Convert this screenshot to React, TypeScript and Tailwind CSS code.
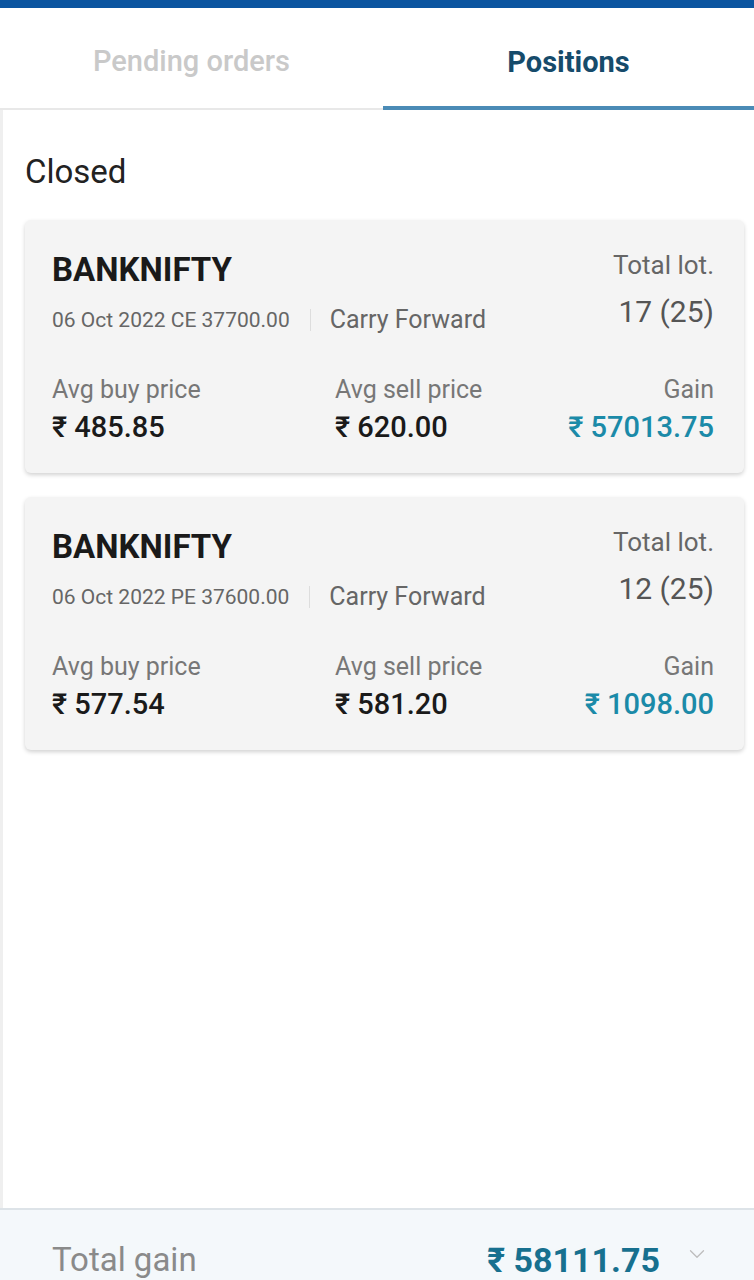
import { ChevronDown } from "lucide-react";

type Position = {
    symbol: string;
    contract: string;
    product: string;
    lots: string;
    buy: string;
    sell: string;
    gain: string;
};

const positions: Position[] = [
    {
        symbol: "BANKNIFTY",
        contract: "06 Oct 2022 CE 37700.00",
        product: "Carry Forward",
        lots: "17 (25)",
        buy: "₹ 485.85",
        sell: "₹ 620.00",
        gain: "₹ 57013.75",
    },
    {
        symbol: "BANKNIFTY",
        contract: "06 Oct 2022 PE 37600.00",
        product: "Carry Forward",
        lots: "12 (25)",
        buy: "₹ 577.54",
        sell: "₹ 581.20",
        gain: "₹ 1098.00",
    },
];

function PositionCard({ p }: { p: Position }) {
    return (
        <div className="h-[253px] rounded-md bg-[#f4f4f4] pl-[27px] pr-[30px] pt-[30px] shadow-[0_2px_4px_rgba(0,0,0,0.18)]">
            <div className="flex items-start justify-between">
                <div>
                    <div className="text-[33px] font-bold leading-[40px] text-[#1a1a1a]">{p.symbol}</div>
                    <div className="mt-[16px] flex items-center">
                        <span className="text-[21px] leading-[28px] text-[#666666]">{p.contract}</span>
                        <span className="ml-[20px] h-[22px] w-px bg-[#dddddd]" />
                        <span className="ml-[19px] text-[25px] leading-[28px] text-[#666666]">{p.product}</span>
                    </div>
                </div>
                <div className="text-right">
                    <div className="text-[26px] leading-[30px] text-[#666666]">Total lot.</div>
                    <div className="mt-[15px] text-[30px] leading-[34px] text-[#555555]">{p.lots}</div>
                </div>
            </div>
            <div className="mt-[40px] grid grid-cols-[283px_1fr_auto]">
                <div>
                    <div className="text-[25px] leading-[32px] text-[#777777]">Avg buy price</div>
                    <div className="mt-[4px] text-[29px] font-medium leading-[34px] text-[#1a1a1a]">{p.buy}</div>
                </div>
                <div>
                    <div className="text-[25px] leading-[32px] text-[#777777]">Avg sell price</div>
                    <div className="mt-[4px] text-[29px] font-medium leading-[34px] text-[#1a1a1a]">{p.sell}</div>
                </div>
                <div className="text-right">
                    <div className="text-[25px] leading-[32px] text-[#777777]">Gain</div>
                    <div className="mt-[4px] text-[29px] font-medium leading-[34px] text-[#1b8aa8]">{p.gain}</div>
                </div>
            </div>
        </div>
    );
}

export default function App() {
    return (
        <div
            className="flex h-[1280px] w-[754px] flex-col overflow-hidden bg-white"
            style={{ fontFamily: "Roboto, 'Noto Sans', sans-serif" }}
        >
            <div className="h-[8px] shrink-0 bg-[#0b55a0]" />
            <div className="flex h-[102px] shrink-0 border-b-2 border-[#e8e8e8]">
                <div className="flex w-[383px] items-center justify-center pt-[8px] text-[29px] font-medium text-[#c9c9c9]">
                    Pending orders
                </div>
                <div className="-mb-[2px] flex flex-1 items-center justify-center border-b-[4px] border-[#4b8bb6] pt-[12px] text-[29px] font-bold text-[#164b6b]">
                    Positions
                </div>
            </div>
            <main className="flex-1 border-l-[3px] border-[#efefef] pl-[22px] pr-[10px]">
                <h2 className="mt-[42px] text-[33px] leading-[40px] text-[#222222]">Closed</h2>
                <div className="mt-[28px] flex flex-col gap-[24px]">
                    {positions.map((p, i) => (
                        <PositionCard key={i} p={p} />
                    ))}
                </div>
            </main>
            <footer className="flex h-[72px] shrink-0 items-start justify-between border-t-2 border-[#dde3e8] bg-[#f4f8fb] pl-[52px] pr-[44px] pt-[30px]">
                <span className="text-[33px] leading-[40px] text-[#8a8a8a]">Total gain</span>
                <div className="flex items-center">
                    <span className="text-[34px] font-bold leading-[40px] text-[#17708f]">₹ 58111.75</span>
                    <ChevronDown className="ml-[24px] -mt-[12px] h-[26px] w-[26px] text-[#bdbdbd]" strokeWidth={1.2} />
                </div>
            </footer>
        </div>
    );
}
